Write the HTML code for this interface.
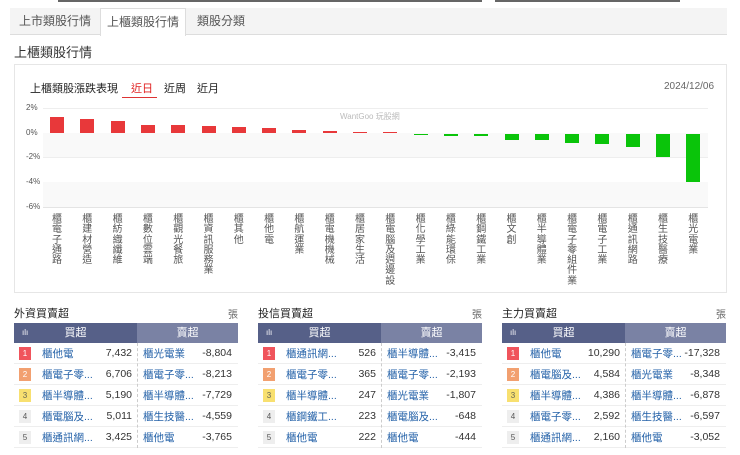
<!DOCTYPE html>
<html><head><meta charset="utf-8"><style>
*{margin:0;padding:0;box-sizing:border-box}
body{width:740px;height:455px;background:#fff;position:relative;overflow:hidden;font-family:"Liberation Sans","Noto Sans CJK TC",sans-serif;color:#333}
.a{position:absolute}
.tabs{left:10px;top:8px;width:717px;height:27px;background:#f4f4f4;border-bottom:1px solid #ddd}
.tab{top:0;height:27px;line-height:26px;font-size:12px;color:#555;text-align:center}
.bar{position:absolute;width:14px}
.r{background:#e8383a}.g{background:#0ac40a}
.lbl{position:absolute;top:215px;width:12px;font-size:10px;line-height:10.3px;color:#555;text-align:center;word-break:break-all}
.yl{position:absolute;left:26px;font-size:8px;color:#555}
.sec{font-size:11px;color:#222}
.tb{position:absolute;top:323px;width:224px}
.th{height:20px;display:flex;font-size:11px;color:#fff;line-height:20px}
.th div:nth-child(1){width:123px;background:#566088;text-align:center;position:relative}
.th div:nth-child(2){flex:1;background:#7a82a4;text-align:center}
.row{height:21px;display:flex;align-items:center;font-size:10.5px;border-bottom:1px solid #eee;position:relative}
.rk{width:12px;height:13px;margin-left:5px;font-size:8px;line-height:13px;text-align:center;color:#fff}
.n{color:#2361a8;position:absolute;left:28px}
.v{position:absolute;right:106px;color:#333}
.n2{color:#2361a8;position:absolute;left:129px}
.v2{position:absolute;right:6px;color:#333}
.dv{position:absolute;left:123px;top:0;bottom:0;border-left:1px dashed #ccc}
</style></head><body>
<div class="a" style="left:58px;top:0;width:424px;height:2px;background:#666"></div>
<div class="a" style="left:495px;top:0;width:185px;height:2px;background:#666"></div>
<div class="a tabs">
<div class="a tab" style="left:0;width:90px">上市類股行情</div>
<div class="a tab" style="left:90px;width:86px;height:28px;background:#fff;border:1px solid #ddd;border-bottom:none">上櫃類股行情</div>
<div class="a tab" style="left:176px;width:70px">類股分類</div>
</div>
<div class="a" style="left:14px;top:42px;font-size:13px;color:#333">上櫃類股行情</div>
<div class="a" style="left:14px;top:64px;width:713px;height:229px;border:1px solid #e6e6e6"></div>
<div class="a" style="left:30px;top:80px;font-size:11px;color:#222">上櫃類股漲跌表現</div>
<div class="a" style="left:131px;top:80px;font-size:11px;color:#e02020">近日</div>
<div class="a" style="left:122px;top:97px;width:35px;height:1px;background:#d33"></div>
<div class="a" style="left:164px;top:80px;font-size:11px;color:#222">近周</div>
<div class="a" style="left:197px;top:80px;font-size:11px;color:#222">近月</div>
<div class="a" style="left:664px;top:81px;font-size:10px;color:#666">2024/12/06</div>
<div class="a" style="left:43px;top:133px;width:665px;height:24px;background:#f9f9f9"></div>
<div class="a" style="left:43px;top:182px;width:665px;height:25px;background:#f9f9f9"></div>
<div class="a" style="left:43px;top:108px;width:665px;height:1px;background:#eee"></div>
<div class="a" style="left:43px;top:157px;width:665px;height:1px;background:#eee"></div>
<div class="a" style="left:43px;top:207px;width:665px;height:1px;background:#e4e4e4"></div>
<div class="yl" style="top:103px">2%</div><div class="yl" style="top:128px">0%</div><div class="yl" style="top:152px">-2%</div><div class="yl" style="top:177px">-4%</div><div class="yl" style="top:202px">-6%</div>
<div class="a" style="left:340px;top:111px;font-size:8px;color:#bbb">WantGoo 玩股網</div>
<div id="c"></div>
<script>
var L=["櫃電子通路","櫃建材營造","櫃紡織纖維","櫃數位雲端","櫃觀光餐旅","櫃資訊服務業","櫃其他","櫃他電","櫃航運業","櫃電機機械","櫃居家生活","櫃電腦及週邊設","櫃化學工業","櫃綠能環保","櫃鋼鐵工業","櫃文創","櫃半導體業","櫃電子零組件業","櫃電子工業","櫃通訊網路","櫃生技醫療","櫃光電業"];
var V=[16,14,12,8,8,7,6,5,3,2,1,1,-1,-2,-2,-6,-6,-9,-10,-13,-23,-48];
var h="";
for(var i=0;i<22;i++){var c=57+i*30.3;var v=V[i];
if(v>0)h+='<div class="bar r" style="left:'+(c-7)+'px;top:'+(133-v)+'px;height:'+v+'px"></div>';
else h+='<div class="bar g" style="left:'+(c-7)+'px;top:134px;height:'+(-v)+'px"></div>';
h+='<div class="lbl" style="left:'+(c-6)+'px">'+L[i]+'</div>';}
document.getElementById("c").innerHTML=h;
</script>
<div class="a sec" style="left:14px;top:305px">外資買賣超</div><div class="a" style="left:228px;top:306px;font-size:10px;color:#666">張</div>
<div class="a sec" style="left:258px;top:305px">投信買賣超</div><div class="a" style="left:472px;top:306px;font-size:10px;color:#666">張</div>
<div class="a sec" style="left:502px;top:305px">主力買賣超</div><div class="a" style="left:716px;top:306px;font-size:10px;color:#666">張</div>
<div id="t"></div>
<script>
var T=[[14,[["櫃他電","7,432","櫃光電業","-8,804"],["櫃電子零...","6,706","櫃電子零...","-8,213"],["櫃半導體...","5,190","櫃半導體...","-7,729"],["櫃電腦及...","5,011","櫃生技醫...","-4,559"],["櫃通訊網...","3,425","櫃他電","-3,765"]]],
[258,[["櫃通訊網...","526","櫃半導體...","-3,415"],["櫃電子零...","365","櫃電子零...","-2,193"],["櫃半導體...","247","櫃光電業","-1,807"],["櫃鋼鐵工...","223","櫃電腦及...","-648"],["櫃他電","222","櫃他電","-444"]]],
[502,[["櫃他電","10,290","櫃電子零...","-17,328"],["櫃電腦及...","4,584","櫃光電業","-8,348"],["櫃半導體...","4,386","櫃半導體...","-6,878"],["櫃電子零...","2,592","櫃生技醫...","-6,597"],["櫃通訊網...","2,160","櫃他電","-3,052"]]]];
var bg=["#f0545c","#f2a070","#f8e070","#eee","#eee"],fc=["#fff","#fff","#665","#555","#555"];
var s="";
T.forEach(function(t){s+='<div class="tb" style="left:'+t[0]+'px"><div class="th"><div><span style="position:absolute;left:8px;font-size:8px">ılı</span>買超</div><div>賣超</div></div><div style="position:relative">';
t[1].forEach(function(r,i){s+='<div class="row"><div class="rk" style="background:'+bg[i]+';color:'+fc[i]+'">'+(i+1)+'</div><span class="n">'+r[0]+'</span><span class="v">'+r[1]+'</span><span class="n2">'+r[2]+'</span><span class="v2">'+r[3]+'</span></div>';});
s+='<div class="dv"></div></div></div>';});
document.getElementById("t").innerHTML=s;
</script>
</body></html>
